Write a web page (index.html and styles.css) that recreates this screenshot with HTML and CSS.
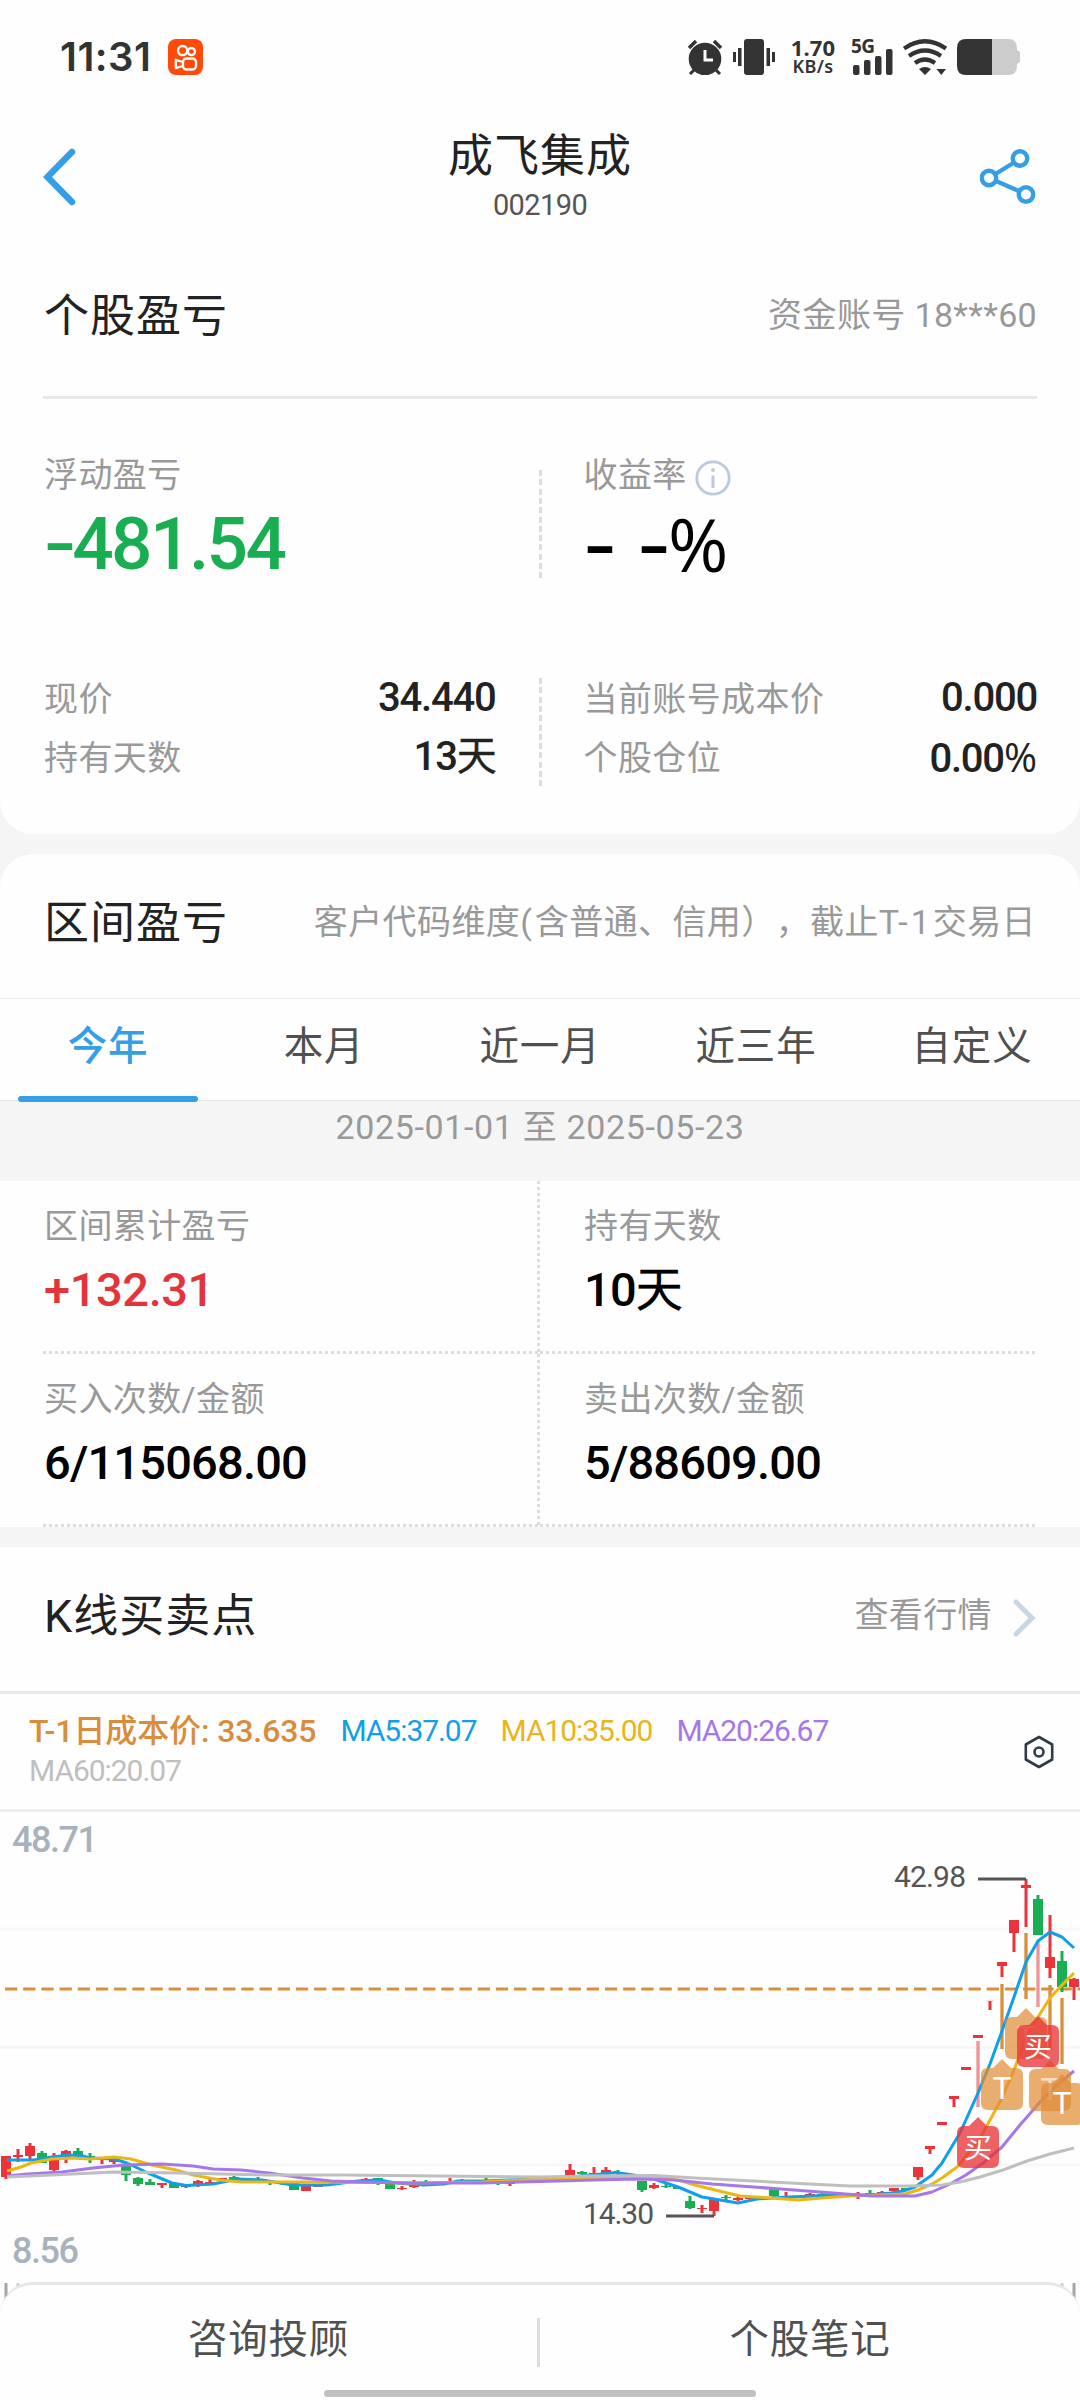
FILE: index.html
```html
<!DOCTYPE html>
<html lang="zh-CN">
<head>
<meta charset="utf-8">
<title>个股盈亏</title>
<link rel="stylesheet" href="styles.css">
</head>
<body>
<div class="screen">
  <section class="card card-top">
    <div class="status">
      <span class="time">11:31</span>
      <svg class="app" width="35" height="36" viewBox="0 0 35 36">
        <rect width="35" height="36" rx="8" fill="#ff4a08"/>
        <g fill="none" stroke="#fff" stroke-width="2.3"><circle cx="14.6" cy="11.6" r="4.6"/><circle cx="23.4" cy="12.6" r="3.6"/><rect x="15" y="19.5" width="13" height="11" rx="3.4"/><path d="M14.5 23l-6.700-2.200v8.400l6.700-2.200" stroke-linejoin="round"/></g>
      </svg>
      <svg class="sys" width="88" height="36" viewBox="0 0 88 36" fill="#333">
        <circle cx="18" cy="20" r="16.300"/>
        <path d="M2 9l7-7M34 9l-7-7" stroke="#333" stroke-width="3.500"/>
        <path d="M7 31l-4 4M29 31l4 4" stroke="#333" stroke-width="3"/>
        <path d="M18 11v10h8" fill="none" stroke="#fff" stroke-width="3"/>
        <rect x="57" y="0" width="20" height="36" rx="3"/>
        <rect x="51" y="9" width="3.500" height="18"/><rect x="46" y="13" width="3" height="10"/>
        <rect x="79.500" y="9" width="3.500" height="18"/><rect x="85" y="13" width="3" height="10"/>
      </svg>
      <span class="speed"><b>1.70</b><b class="unit">KB/s</b></span>
      <span class="net"><b>5G</b>
        <svg width="42" height="26" viewBox="0 0 42 26" fill="#333"><rect x="2" y="16" width="6.500" height="10" rx="2"/><rect x="13" y="11" width="6.500" height="15" rx="2"/><rect x="24" y="7" width="6.500" height="19" rx="2"/><rect x="35" y="0" width="6.500" height="26" rx="2"/></svg>
      </span>
      <svg class="wifi" width="45" height="36" viewBox="0 0 45 36">
        <g fill="none" stroke="#333" stroke-width="4.200"><path d="M1 9.500Q22 -5 43 9.500"/><path d="M6 17Q22 6 38 17"/><path d="M12 24Q22 17 32 24"/></g>
        <path d="M16 30Q22 26 28 30L22 36ZM33.500 30h9.500l-4.700 6z" fill="#333"/>
      </svg>
      <svg width="64" height="36" viewBox="0 0 64 36"><path d="M35 0H51Q60 0 60 9V11L63 13V23L60 25V27Q60 36 51 36H35Z" fill="#ccc"/><path d="M35 0H9Q0 0 0 9V27Q0 36 9 36H35Z" fill="#333"/></svg>
    </div>
    <header class="nav">
      <svg width="34" height="58" viewBox="0 0 34 58"><path d="M30 4L5.500 29L30 54" fill="none" stroke="#349ee6" stroke-width="6.500" stroke-linecap="round" stroke-linejoin="miter"/></svg>
      <div class="stock"><h1>成飞集成</h1><p>002190</p></div>
      <svg width="57" height="58" viewBox="0 0 57 58" fill="none" stroke="#349ee6" stroke-width="4.400"><circle cx="40" cy="10.500" r="7.200"/><circle cx="9" cy="30" r="7.200"/><circle cx="46" cy="46.500" r="7.200"/><path d="M15.500 26L34 14.500M16 33L39 43"/></svg>
    </header>
    <div class="head ruled"><h2>个股盈亏</h2><span class="note">资金账号 <span class="acct">18***60</span></span></div>
    <div class="split summary">
      <div class="cell"><p class="label">浮动盈亏</p><p class="big green"><span class="dash">-</span>481.54</p></div>
      <i class="divider"></i>
      <div class="cell"><p class="label">收益率<svg class="info" width="36" height="36" viewBox="0 0 36 36" fill="none" stroke="#bccbdc"><circle cx="18" cy="18" r="16.200" stroke-width="2.800"/><path d="M18 15.500V28" stroke-width="3"/><circle cx="18" cy="10" r="2" fill="#bccbdc" stroke="none"/></svg></p><p class="big"><span class="dash">-</span><span class="dash second">-</span><span class="pct">%</span></p></div>
    </div>
    <div class="split detail">
      <div class="cell"><p class="row"><span class="label">现价</span><b>34.440</b></p><p class="row"><span class="label">持有天数</span><b>13<span class="unit-day">天</span></b></p></div>
      <i class="divider"></i>
      <div class="cell"><p class="row"><span class="label">当前账号成本价</span><b>0.000</b></p><p class="row"><span class="label">个股仓位</span><b>0.00<span class="pct">%</span></b></p></div>
    </div>
  </section>

  <section class="card card-range">
    <div class="head"><h2>区间盈亏</h2><span class="note">客户代码维度<span class="wide">(</span>含普通、信用），截止<span class="wide">T-1</span>交易日</span></div>
    <nav class="tabs"><a class="active">今年</a><a>本月</a><a>近一月</a><a>近三年</a><a>自定义</a></nav>
    <p class="dates">2025-01-01 至 2025-05-23</p>
    <div class="stats">
      <div class="stat"><p class="label">区间累计盈亏</p><p class="val red">+132.31</p></div>
      <div class="stat"><p class="label">持有天数</p><p class="val">10<span class="unit-day">天</span></p></div>
      <div class="stat"><p class="label">买入次数/金额</p><p class="val">6/115068.00</p></div>
      <div class="stat"><p class="label">卖出次数/金额</p><p class="val">5/88609.00</p></div>
    </div>
  </section>

  <section class="card card-kline">
    <div class="head"><h2>K线买卖点</h2><span class="note more">查看行情<svg width="24" height="40" viewBox="0 0 24 40"><path d="M4 4L20 20L4 36" fill="none" stroke="#c9d6e3" stroke-width="5" stroke-linecap="round"/></svg></span></div>
    <div class="legend">
      <div class="mas"><span class="cost">T-1日成本价: 33.635</span><span class="ma5">MA5:37.07</span><span class="ma10">MA10:35.00</span><span class="ma20">MA20:26.67</span><span class="ma60">MA60:20.07</span></div>
      <svg width="32" height="34" viewBox="0 0 32 34" fill="none" stroke="#303b48" stroke-width="2.600"><path d="M16 2L29.200 9.500V24.500L16 32L2.800 24.500V9.500Z" stroke-linejoin="round"/><circle cx="16" cy="17" r="4.500"/></svg>
    </div>
    <svg class="chart" width="1080" height="588" viewBox="0 1812 1080 588">
      <defs><path id="pin" d="M-14 9H-9L0 0L9 9H14Q21 9 21 16V44Q21 51 14 51H-14Q-21 51 -21 44V16Q-21 9 -14 9Z"/></defs>
      <path class="gridline" d="M0 1929H1080M0 2047.500H1080M0 2165H1080"/>
      <path class="costline" d="M5 1989H1080"/>
      <g class="up">
        <path class="wick" d="M6 2156V2179M18 2149V2162M30 2143V2159M54 2153V2171M66 2150V2163M102 2157V2164M114 2157V2164M162 2184V2188M186 2185V2188M198 2180V2187M210 2179V2184M306 2185V2191M366 2178V2183M402 2186V2190M414 2180V2188M450 2178V2183M510 2181V2186M534 2178V2182M570 2164V2175M594 2167V2175M606 2167V2173M654 2183V2189M702 2205V2213M714 2199V2216M738 2197V2201M786 2192V2197M810 2193V2197M858 2192V2199M882 2191V2194M918 2167V2180M930 2147V2154M954 2097V2107M990 2001V2010M1002 1962V1977M1014 1920V1952M1026 1879V1927M1050 1915V1978M1074 1978V2000"/>
        <path class="body" d="M6 2156V2177M18 2155V2157M30 2146V2156M54 2160V2170M66 2151V2159M102 2158V2160M114 2160V2162M162 2183V2185M186 2185V2187M198 2181V2184M210 2182V2184M222 2178V2181M306 2186V2191M318 2184V2187M342 2180V2182M354 2180V2182M366 2179V2181M402 2188V2189M414 2185V2187M510 2181V2184M522 2179V2181M534 2179V2181M570 2170V2175M594 2173V2175M606 2170V2173M654 2185V2188M702 2208V2209M714 2199V2211M738 2198V2200M750 2197V2199M810 2194V2196M858 2194V2196M882 2192V2194M894 2188V2191M918 2167V2177M930 2146V2149M942 2122V2125M954 2096V2099M966 2067V2070M978 2035V2038M1002 1962V1966M1014 1920V1933M1026 1885V1888M1050 1957V1968M1074 1979V1987"/>
        <path d="M986 2001H994" stroke-width="1" opacity=".3"/>
      </g>
      <g class="down">
        <path class="wick" d="M42 2151V2163M78 2148V2156M90 2153V2163M126 2166V2181M138 2177V2186M150 2179V2185M234 2176V2180M258 2177V2183M270 2181V2185M282 2181V2185M378 2178V2185M426 2180V2184M462 2179V2183M486 2178V2183M498 2180V2185M582 2171V2175M618 2170V2175M642 2181V2192M666 2184V2188M690 2196V2209M726 2195V2200M774 2189V2197M822 2193V2197M870 2190V2194M1038 1895V1935M1062 1951V1992"/>
        <path class="body" d="M42 2153V2163M78 2151V2156M90 2156V2158M126 2166V2175M138 2178V2184M150 2182V2185M174 2183V2188M234 2177V2180M246 2180V2182M270 2181V2183M282 2182V2184M294 2183V2190M378 2178V2181M390 2183V2189M438 2181V2183M474 2180V2182M546 2178V2180M558 2178V2180M582 2172V2174M618 2172V2174M630 2174V2176M642 2181V2190M666 2186V2187M678 2187V2189M690 2201V2208M726 2197V2198M774 2189V2196M822 2194V2196M870 2193V2195M906 2188V2190M1038 1899V1935M1062 1961V1987"/>
      </g>
      <g class="stem"><path class="sell" d="M1002 1984V2049M1026 1933V1999M1050 1985V2050M1062 1998V2064"/><path class="buy" d="M978 2041V2107M1038 1941V2007"/></g>
      <g class="ma">
        <path stroke="#119fe8" d="M7 2160L34 2160L52 2157L69 2155L83 2156L90 2158L114 2159L127 2163L148 2173L172 2183L186 2185.500L213 2184L238 2179L262 2180L293 2185L327 2185L358 2181L379 2180L396 2183L424 2185L444 2184L458 2181L482 2181L540 2179L561 2178L592 2175L616 2172.500L633 2175L657 2180L678 2187L702 2197L738 2203L757 2199L788 2197L815 2196L850 2195L871 2195L891 2193L903 2191L915 2187L932 2175L942 2163L960 2133L978 2093L990 2064L1002 2031L1014 1997L1026 1962L1038 1941L1050 1932L1062 1937L1074 1948"/>
        <path stroke="#ecb713" d="M7 2171L21 2167L31 2163L52 2159L72 2158L90 2159L114 2157L131 2159L152 2165L176 2170L193 2175L220 2180L241 2182L327 2182L413 2183L482 2182L540 2179L616 2178L654 2177L678 2180L695 2185L719 2191L740 2196L771 2198L798 2200L822 2198L850 2196L905 2194L918 2190L932 2184L942 2178L957 2167L978 2142L1002 2098L1014 2070L1026 2038L1038 2017L1050 1998L1062 1985L1074 1973"/>
        <path stroke="#a677e8" d="M7 2176L28 2174L62 2172L93 2168L124 2165L162 2164L193 2166L213 2169L241 2170L269 2173L303 2178L331 2181L358 2182L413 2183L482 2183L540 2181.500L595 2180L636 2179L674 2180L712 2184L781 2189L833 2193L871 2196L915 2196L932 2192L950 2184L966 2175L983 2163L1002 2147L1020 2125L1040 2102L1057 2085L1074 2071"/>
        <path stroke="#bfbfbf" d="M7 2177L52 2175L114 2172L179 2173L269 2175L344 2175L540 2177L592 2176L654 2175.500L695 2178L753 2181L809 2184L850 2186L912 2186L942 2185L960 2182L980 2177L1003 2170L1027 2161L1050 2154L1074 2148"/>
      </g>
      <g class="pins">
        <g transform="translate(1002 2059)"><use href="#pin" class="t"/><text y="40">T</text></g>
        <g transform="translate(1026 2008)"><use href="#pin" class="t"/><text y="40" opacity=".5">T</text></g>
        <g transform="translate(1050 2060)"><use href="#pin" class="t"/><text y="40" opacity=".6">T</text></g>
        <g transform="translate(1062 2074)"><use href="#pin" class="t"/><text y="40">T</text></g>
        <g transform="translate(1038 2016)"><use href="#pin" class="b"/><text class="cn" y="41">买</text></g>
        <g transform="translate(978 2117)"><use href="#pin" class="b"/><text class="cn" y="41">买</text></g>
      </g>
      <path class="leader" d="M978 1879H1026M666 2216H714"/>
      <text class="mark" x="894" y="1887" textLength="72">42.98</text>
      <text class="mark" x="583" y="2224" textLength="71">14.30</text>
      <text class="axis" x="12" y="1852" textLength="86">48.71</text>
      <text class="axis" x="12" y="2263" textLength="67">8.56</text>
      <path d="M6 2283V2330M1074 2283V2330" stroke="#a5a5a5" stroke-width="3"/>
      <path d="M18 2283V2330M1062 2283V2330" stroke="#d0d0d0" stroke-width="3"/>
    </svg>
  </section>

  <footer class="bottom"><a>咨询投顾</a><i></i><a>个股笔记</a><span class="home"></span></footer>
</div>
</body>
</html>
```
FILE: styles.css
```css
* { box-sizing: border-box; margin: 0; padding: 0; }
body { background: #f5f5f5; font-family: Roboto, "Noto Sans CJK SC", sans-serif; color: #222; text-spacing-trim: space-all; }
svg { display: block; flex: none; }
.screen { position: relative; width: 1080px; height: 2400px; overflow: hidden; display: flex; flex-direction: column; gap: 20px; }
.card { background: #fefefe; flex: none; }
.card-top { height: 834px; border-radius: 0 0 33px 33px; }
.card-range { height: 673px; border-radius: 33px 33px 0 0; }
h1, h2 { font-weight: 400; letter-spacing: 1px; font-size: 45px; color: #222; }

.status { height: 113px; padding: 0 59px 0 60px; display: flex; align-items: center; color: #333; }
.time { font: 600 40px/50px Inter, sans-serif; letter-spacing: .5px; width: 108px; }
.sys { margin-left: 484px; }
.speed { width: 48px; margin-left: 14px; display: flex; flex-direction: column; align-items: center; font: 22px/19px "Noto Sans", sans-serif; }
.speed b { font-weight: 700; letter-spacing: .2px; }
.speed .unit { font-size: 18px; font-weight: 600; letter-spacing: .3px; }
.net { position: relative; display: flex; width: 42px; height: 36px; margin-left: 14px; align-items: flex-end; }
.net b { position: absolute; left: 0; top: -2px; font: 700 19px/19px "Noto Sans", sans-serif; letter-spacing: -.6px; }
.wifi { margin: 0 9px 0 10px; }

.nav { height: 128px; padding: 0 43px 0 42px; display: flex; align-items: center; justify-content: space-between; }
.stock { width: 300px; padding-top: 6px; margin-left: 24px; text-align: center; }
.stock h1 { line-height: 54px; margin-bottom: -4px; }
.stock p { font-size: 29px; line-height: 50px; letter-spacing: -.6px; color: #555; }

.head { height: 144px; padding: 0 44px 13px 44px; display: flex; align-items: center; justify-content: space-between; }
.head.ruled { height: 158px; margin: 0 43px; padding: 0 0 13px 1px; border-bottom: 3px solid #e8e8e8; }
.note { font-size: 34px; letter-spacing: .4px; color: #999; white-space: nowrap; }
.note .wide { letter-spacing: 3px; }
.acct { letter-spacing: .3px; }
.label { font-size: 34px; letter-spacing: .4px; color: #999; font-weight: 400; }

.split { display: grid; grid-template-columns: 1fr 3px 1fr; }
.divider { height: 108px; background: repeating-linear-gradient(#ddd 0 6px, transparent 6px 9.300px); }
.cell { padding: 0 43px 0 44px; }
.divider + .cell { padding-left: 42px; }
.summary { padding-top: 55px; }
.summary .divider { margin-top: 16px; }
.summary .label { line-height: 42px; height: 49px; display: flex; }
.info { margin: 6px 0 0 8px; }
.big { font-size: 73px; line-height: 82px; height: 80px; font-weight: 500; letter-spacing: -2.600px; color: #000; white-space: nowrap; }
.big .dash { display: inline-block; transform: scaleX(1.300); transform-origin: 0 50%; margin-right: 6px; }
.big .dash.second { margin-left: 26px; margin-right: 8px; }
.big.green { color: #1aae52; }
.pct { font-family: "Open Sans", Roboto, sans-serif; letter-spacing: 0; }
.detail { padding-top: 85px; }
.detail .divider { margin-top: 10px; }
.row { display: flex; justify-content: space-between; align-items: center; height: 59px; }
.row .label { margin-top: -2px; }
.row b { font-size: 40px; font-weight: 500; letter-spacing: -1.200px; line-height: 50px; padding-top: 1px; height: 52px; }
.unit-day { font-weight: 400; -webkit-text-stroke: .4px; }

.tabs { height: 103px; display: grid; grid-template-columns: repeat(5, 1fr); border-top: 1px solid #ebebeb; border-bottom: 1px solid #e8e8e8; }
.tabs a { position: relative; text-align: center; font-size: 39.500px; line-height: 96px; letter-spacing: .8px; color: #505050; }
.tabs .active { color: #349ee6; font-weight: 500; }
.tabs .active::after { content: ""; position: absolute; left: 18px; right: 18px; bottom: -2px; height: 6px; border-radius: 3px; background: #349ee6; }
.dates { height: 80px; background: #f5f5f5; text-align: center; font-size: 34px; line-height: 52px; letter-spacing: .65px; color: #999; }
.stats { margin: 0 43px; display: grid; grid-template-columns: 497px 497px; }
.stat { position: relative; height: 173px; padding: 25px 0 0 44px; background: repeating-linear-gradient(90deg, #ddd 0 3px, transparent 3px 6px) 0 100% / 100% 3px no-repeat; }
.stat:nth-child(odd) { padding-left: 1px; background: repeating-linear-gradient(90deg, #ddd 0 3px, transparent 3px 6px) 0 100% / 100% 3px no-repeat, repeating-linear-gradient(#ddd 0 3px, transparent 3px 6px) 100% 0 / 3px 100% no-repeat; }
.stat .label { line-height: 41px; height: 40px; }
.val { margin-top: 14px; font-size: 47px; line-height: 60px; font-weight: 500; letter-spacing: -.8px; color: #000; }
.val.red { color: #e2343b; letter-spacing: -.4px; }

.more { display: flex; align-items: center; gap: 20px; }
.more svg { margin-top: 10px; }
.legend { height: 121px; border-top: 3px solid #e8e8e8; border-bottom: 3px solid #eee; display: flex; justify-content: space-between; align-items: center; padding: 0 25px 0 29px; }
.mas { width: 880px; height: 80px; display: flex; flex-wrap: wrap; column-gap: 24px; font-size: 30px; line-height: 38px; letter-spacing: -1.050px; }
.cost { font-size: 32px; font-weight: 500; letter-spacing: -.1px; color: #d88c3c; }
.ma5 { color: #119fe8; }
.ma10 { color: #e8b51c; }
.ma20 { color: #a677e8; }
.ma60 { color: #bfbfbf; }

.chart path { fill: none; }
.gridline { stroke: #f7f7f7; stroke-width: 3; }
.costline { stroke: #d88f3c; stroke-width: 3; stroke-dasharray: 12.300 5.880; }
.up { stroke: #ea333b; }
.down { stroke: #1aae52; }
.wick { stroke-width: 3; }
.body { stroke-width: 10; }
.stem { stroke-width: 3.300; }
.sell { stroke: #d88f3c; }
.buy { stroke: #ee9396; }
.ma path { stroke-width: 3; stroke-linejoin: round; }
.chart #pin { fill: inherit; }
.t { fill: rgba(225, 142, 56, .72); }
.b { fill: rgba(233, 52, 56, .78); }
.pins text { fill: #fff; font-size: 32px; text-anchor: middle; }
.pins .cn { font-size: 28px; }
.leader { stroke: #555; stroke-width: 3; }
.mark { font-size: 30px; fill: #555; }
.axis { font-size: 36px; font-weight: 500; fill: #a8b2bc; }

.bottom { position: absolute; left: 0; right: 0; bottom: 0; height: 118px; background: #fefefe; border-top: 3px solid #e6e6e6; border-radius: 33px 33px 0 0; display: grid; grid-template-columns: 537px 3px 540px; padding-top: 33px; text-align: center; }
.bottom a { font-size: 39.500px; line-height: 44px; letter-spacing: .8px; color: #505050; }
.bottom i { height: 49px; background: #ddd; }
.home { position: absolute; left: 324px; bottom: 3px; width: 432px; height: 7px; border-radius: 4px; background: #c0c0c0; }
```
